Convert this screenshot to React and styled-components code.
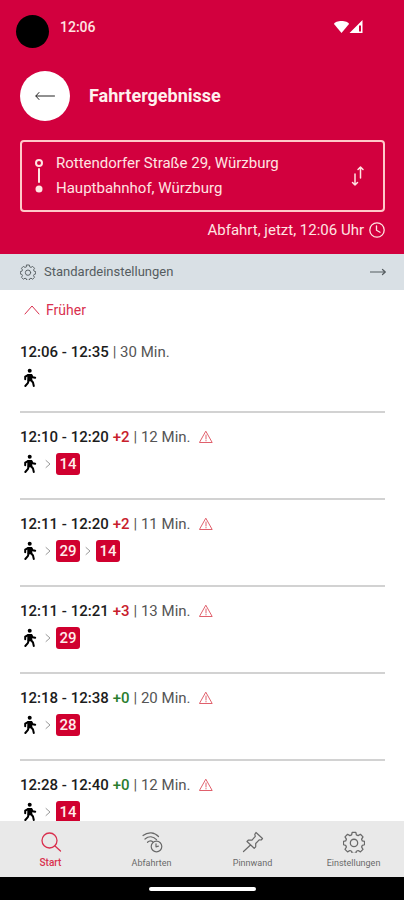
import React from "react";
import styled, { createGlobalStyle } from "styled-components";

const trips = [
  { start: "12:06", end: "12:35", duration: 30, lines: [] },
  { start: "12:10", end: "12:20", delay: 2, duration: 12, lines: [14], warning: true },
  { start: "12:11", end: "12:20", delay: 2, duration: 11, lines: [29, 14], warning: true },
  { start: "12:11", end: "12:21", delay: 3, duration: 13, lines: [29], warning: true },
  { start: "12:18", end: "12:38", delay: 0, duration: 20, lines: [28], warning: true },
  { start: "12:28", end: "12:40", delay: 0, duration: 12, lines: [14], warning: true },
];

const Icon = ({ children, w, h = w, box, sw = 1 }) => (
  <svg
    width={w}
    height={h}
    viewBox={box || `0 0 ${w} ${h}`}
    fill="none"
    stroke="currentColor"
    strokeWidth={sw}
    strokeLinecap="round"
    strokeLinejoin="round"
    aria-hidden="true"
  >
    {children}
  </svg>
);

const Gear = ({ size }) => (
  <Icon w={size} box="0 0 24 24" sw={1.4}>
    <path d="M10 1.500h4l.6 2.800 1.900.8 2.500-1.500 2.800 2.800-1.500 2.500.8 1.900 2.400.6v3.600l-2.400.6-.8 1.900 1.500 2.500-2.800 2.800-2.500-1.500-1.900.8-.6 2.300h-4l-.6-2.300-1.900-.8L5 22.800 2.200 20l1.500-2.500-.8-1.900-2.400-.6v-3.600l2.400-.6.8-1.900-1.500-2.500L5 3.600l2.500 1.500 1.900-.8z" />
    <circle cx="12" cy="13" r="4" />
  </Icon>
);

const Walker = () => (
  <Icon w={20} sw={2}>
    <circle cx="9.700" cy="2.700" r="2" fill="currentColor" stroke="none" />
    <path d="M8.300 7h3v5.200h-3z" fill="currentColor" />
    <path d="M8.300 7L5.200 8.600v2.600M11.300 7l1.400 2.200 2.500.6M8.600 12.200L8 14.800 5.300 18M11 12.200l2 2.300.8 3.500" />
  </Icon>
);

const Warning = () => (
  <Icon w={14} h={14}>
    <path d="M7 1.500L13.200 12.500H.8zM7 5v4M7 10.500v.4" />
  </Icon>
);

const tabs = [
  {
    label: "Start",
    active: true,
    icon: (
      <Icon w={22} sw={1.3}>
        <circle cx="9.500" cy="9.500" r="7.500" />
        <path d="M15 15l5.500 5" />
      </Icon>
    ),
  },
  {
    label: "Abfahrten",
    icon: (
      <Icon w={22} sw={1.2}>
        <path d="M2 4.500C7 .5 13.500 1 17.500 5.500M4 8c4-3.300 8.500-2.500 11.500.7M6.500 11.300c1.700-1.600 3.700-1.600 5.300-.6" />
        <circle cx="15.500" cy="15.500" r="5.300" />
        <path d="M15 12.800v3l2.400-.6" />
      </Icon>
    ),
  },
  {
    label: "Pinnwand",
    icon: (
      <Icon w={22} sw={1.2}>
        <path d="M14 1.500l6.500 6-1.300 1.500-2-.2-3.500 3.700v3.300l-1.500 1.500L5 10.500l1.500-1.500 3.500.2L13.300 5.300l-.5-2zM8.500 14L1.500 20.500" />
      </Icon>
    ),
  },
  { label: "Einstellungen", icon: <Gear size={22} /> },
];

const App = () => {
  return (
    <>
      <GlobalStyle />
      <Screen>
        <Header>
          <StatusBar>
            <Camera />
            <Clock>12:06</Clock>
            <svg width="29" height="14" viewBox="0 0 29 14" fill="#fff" aria-hidden="true">
              <path d="M0 4C1 0 14 0 15 4L7.500 13z" />
              <path d="M28.500 0v13H15.500zM25 5.500v6h2v-6z" fillRule="evenodd" />
            </svg>
          </StatusBar>

          <TitleRow>
            <BackButton type="button" aria-label="Zurück">
              <Icon w={20} h={10}>
                <path d="M19.500 5H1M4 1.500L.8 5 4 8.500" />
              </Icon>
            </BackButton>
            <h1>Fahrtergebnisse</h1>
          </TitleRow>

          <RouteCard>
            <Icon w={10} h={36} sw={2}>
              <circle cx="5" cy="5" r="3" />
              <path d="M5 11v13" />
              <circle cx="5" cy="31" r="3.500" fill="currentColor" stroke="none" />
            </Icon>
            <div>
              <p>Rottendorfer Straße 29, Würzburg</p>
              <p>Hauptbahnhof, Würzburg</p>
            </div>
            <SwapButton type="button" aria-label="Start und Ziel tauschen">
              <Icon w={14} h={22} sw={1.5}>
                <path d="M4 9v11M1.500 17.500L4 20l2.500-2.500M9.500 13V2M7 4.500L9.500 2 12 4.500" />
              </Icon>
            </SwapButton>
          </RouteCard>

          <Departure type="button">
            Abfahrt, jetzt, 12:06 Uhr
            <Icon w={16} sw={1.3}>
              <circle cx="8" cy="8" r="7.200" />
              <path d="M7.500 4v4.300l3.500 2" />
            </Icon>
          </Departure>
        </Header>

        <SettingsBar type="button">
          <Gear size={16} />
          <span>Standardeinstellungen</span>
          <Icon w={16} h={8} sw={1.2}>
            <path d="M.5 4H15M12.500 1.500L15.300 4l-2.800 2.500" />
          </Icon>
        </SettingsBar>

        <Results>
          <Earlier type="button">
            <Icon w={16} h={10}>
              <path d="M1 9l7-8 7 8" />
            </Icon>
            Früher
          </Earlier>
          <ul>
            {trips.map((trip) => (
              <Trip key={trip.start + trip.end}>
                <Times>
                  <strong>
                    {trip.start} - {trip.end}
                  </strong>
                  {trip.delay !== undefined && <Delay $late={trip.delay > 0}>+{trip.delay}</Delay>}
                  <Duration>| {trip.duration} Min.</Duration>
                  {trip.warning && <Warning />}
                </Times>
                <Legs>
                  <Walker />
                  {trip.lines.map((line) => (
                    <React.Fragment key={line}>
                      <Icon w={6} h={10}>
                        <path d="M1 1.500L5 5 1 8.500" />
                      </Icon>
                      <Badge>{line}</Badge>
                    </React.Fragment>
                  ))}
                </Legs>
              </Trip>
            ))}
          </ul>
        </Results>

        <TabBar>
          {tabs.map((tab) => (
            <Tab key={tab.label} href="#" $active={tab.active}>
              {tab.icon}
              <span>{tab.label}</span>
            </Tab>
          ))}
        </TabBar>
        <SystemBar>
          <span />
        </SystemBar>
      </Screen>
    </>
  );
};

const GlobalStyle = createGlobalStyle`
  * {
    box-sizing: border-box;
    margin: 0;
    padding: 0;
  }

  body {
    font-family: Roboto, "Liberation Sans", sans-serif;
    background: #fff;
  }

  button {
    border: none;
    background: none;
    font-family: inherit;
    color: inherit;
    cursor: pointer;
  }

  ul {
    list-style: none;
  }

  svg {
    flex-shrink: 0;
  }
`;

const Screen = styled.div`
  height: 100vh;
  display: flex;
  flex-direction: column;
`;

const Header = styled.header`
  display: flex;
  flex-direction: column;
  padding: 15px 19px 12px 20px;
  background: #d2003e;
  color: #ffe4e2;
`;

const StatusBar = styled.div`
  display: flex;
  align-items: flex-start;
  margin-left: -4px;
  padding-right: 22px;
  margin-bottom: 23px;

  svg {
    margin-top: 5px;
  }
`;

const Camera = styled.span`
  width: 33px;
  height: 33px;
  border-radius: 50%;
  background: #000;
`;

const Clock = styled.time`
  flex: 1;
  margin-left: 11px;
  font-size: 14px;
  font-weight: 500;
  line-height: 24px;
`;

const TitleRow = styled.div`
  display: flex;
  align-items: center;
  gap: 19px;
  margin-bottom: 19px;

  h1 {
    font-size: 18px;
    font-weight: 700;
    line-height: 24px;
    color: #fff0ee;
  }
`;

const BackButton = styled.button`
  display: flex;
  align-items: center;
  justify-content: center;
  width: 50px;
  height: 50px;
  border-radius: 50%;
  background: #fff;
  color: #222;
`;

const RouteCard = styled.div`
  display: flex;
  align-items: center;
  gap: 12px;
  padding: 9px 18px 9px 12px;
  border: 2px solid #ffc9c9;
  border-radius: 4px;

  div {
    flex: 1;
  }

  p {
    font-size: 15px;
    line-height: 25px;
  }
`;

const SwapButton = styled.button`
  display: flex;
`;

const Departure = styled.button`
  display: flex;
  align-items: center;
  align-self: flex-end;
  gap: 5px;
  margin-top: 6px;
  font-size: 15px;
  line-height: 24px;
`;

const SettingsBar = styled.button`
  display: flex;
  align-items: center;
  gap: 8px;
  padding: 8px 18px 8px 20px;
  background: #d9e0e5;
  color: #555c60;
  font-size: 13px;
  line-height: 20px;
  text-align: left;

  span {
    flex: 1;
  }
`;

const Results = styled.main`
  flex: 1;
  min-height: 0;
  overflow: hidden;
  padding: 0 19px 0 20px;
`;

const Earlier = styled.button`
  display: flex;
  align-items: center;
  gap: 6px;
  padding: 10px 4px 8px;
  color: #d9304e;
  font-size: 14px;
  line-height: 20px;
`;

const Trip = styled.li`
  padding: 14px 0 23px;
  border-bottom: 2px solid #d2d2d2;
`;

const Times = styled.div`
  display: flex;
  align-items: center;
  gap: 4px;
  font-size: 15px;
  line-height: 20px;
  color: #1c1c1c;

  strong {
    font-weight: 500;
  }

  svg {
    margin-left: 4px;
    color: #e0606c;
  }
`;

const Delay = styled.span`
  font-weight: 500;
  color: ${({ $late }) => ($late ? "#c8202c" : "#2a7d2e")};
`;

const Duration = styled.span`
  color: #555;
`;

const Legs = styled.div`
  display: flex;
  align-items: center;
  gap: 5px;
  margin-top: 6px;
  color: #9a9a9a;

  svg:first-child {
    color: #000;
  }
`;

const Badge = styled.span`
  width: 24px;
  border-radius: 3px;
  background: #d0002f;
  color: #ffecea;
  font-size: 15px;
  font-weight: 500;
  line-height: 22px;
  text-align: center;
`;

const TabBar = styled.nav`
  display: grid;
  grid-template-columns: repeat(4, 1fr);
  padding: 10px 0 8px;
  background: #e9e9e9;
`;

const Tab = styled.a`
  display: flex;
  flex-direction: column;
  align-items: center;
  gap: 4px;
  color: ${({ $active }) => ($active ? "#d9304e" : "#6a6a6a")};
  font-size: ${({ $active }) => ($active ? "10px" : "9px")};
  font-weight: ${({ $active }) => ($active ? 500 : 400)};
  line-height: 12px;
  text-decoration: none;
`;

const SystemBar = styled.div`
  display: flex;
  justify-content: center;
  padding: 10px 0 9px;
  background: #000;

  span {
    width: 107px;
    height: 4px;
    border-radius: 2px;
    background: #fff;
  }
`;

export default App;
